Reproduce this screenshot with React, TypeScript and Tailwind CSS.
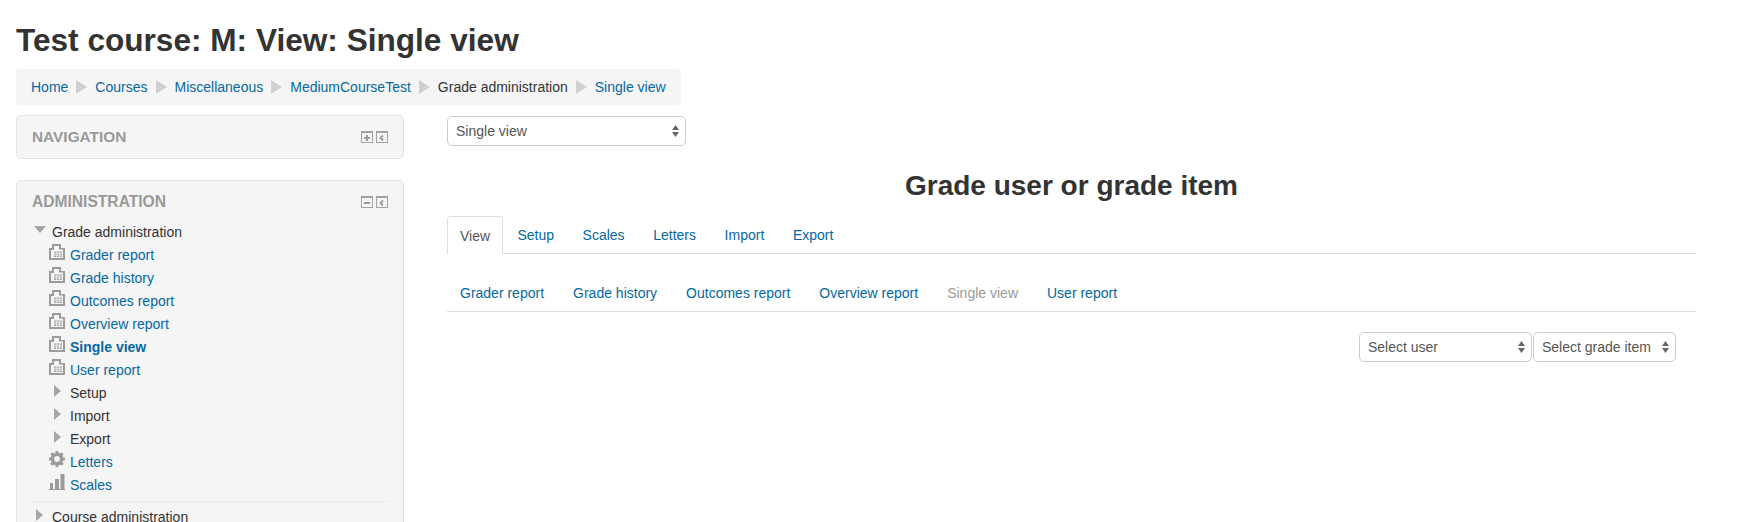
import type { ReactNode } from "react";

const font = "font-['Liberation_Sans',Arial,sans-serif]";
const link = "text-[#0568a0]";

function Sep() {
  return (
    <svg width="11" height="14" viewBox="0 0 11 14" className="shrink-0">
      <path d="M0 0 L11 7 L0 14 Z" fill="#d0d0d0" />
    </svg>
  );
}

function Crumb({ children, plain }: { children: ReactNode; plain?: boolean }) {
  return <span className={plain ? "text-[#333]" : link}>{children}</span>;
}

function BlockIcon({ kind }: { kind: "plus" | "minus" | "left" }) {
  return (
    <svg width="12" height="12" viewBox="0 0 12 12" className="shrink-0">
      <rect x="0.5" y="0.5" width="11" height="11" fill="#f5f5f5" stroke="#a3a3a3" />
      <rect x="0" y="0" width="12" height="2" fill="#a3a3a3" />
      {kind === "plus" && <path d="M3 7 H9 M6 4 V10" stroke="#999" strokeWidth="2" />}
      {kind === "minus" && <path d="M3 7 H9" stroke="#999" strokeWidth="2" />}
      {kind === "left" && <path d="M7 4.5 L4.5 7 L7 9.5" stroke="#999" strokeWidth="1.8" fill="none" />}
    </svg>
  );
}

function TriRight() {
  return (
    <svg width="7" height="12" viewBox="0 0 7 12" className="mb-1 shrink-0">
      <path d="M0 0 L7 6 L0 12 Z" fill="#a6a6a6" />
    </svg>
  );
}

function TriDown() {
  return (
    <svg width="12" height="7" viewBox="0 0 12 7" className="mb-1 shrink-0">
      <path d="M0 0 H12 L6 7 Z" fill="#a6a6a6" />
    </svg>
  );
}

function ReportIcon() {
  return (
    <svg width="16" height="16" viewBox="0 0 16 16" className="mb-[6px] shrink-0">
      <path d="M0 4 H3 V0 H12 V4 H16 V16 H0 Z" fill="#9b9b9b" />
      <path d="M5 2 H10 V5.5 H14 V14 H2 V6 H5 Z" fill="#f5f5f5" />
      <path d="M5 7.5 H13 V13 H5 Z" fill="#a5a5a5" />
      <path d="M5 9.2 H13 M5 11.1 H13 M7.7 7.5 V13 M10.4 7.5 V13" stroke="#f5f5f5" strokeWidth="0.8" />
    </svg>
  );
}

function GearIcon() {
  return (
    <svg width="16" height="16" viewBox="0 0 16 16" className="mb-[6px] shrink-0">
      <circle cx="8" cy="8" r="4.6" fill="none" stroke="#9b9b9b" strokeWidth="3.4" />
      <path d="M8 0 V3 M8 13 V16 M0 8 H3 M13 8 H16 M2.3 2.3 L4.4 4.4 M11.6 11.6 L13.7 13.7 M13.7 2.3 L11.6 4.4 M4.4 11.6 L2.3 13.7" stroke="#9b9b9b" strokeWidth="3" />
    </svg>
  );
}

function BarsIcon() {
  return (
    <svg width="16" height="16" viewBox="0 0 16 16" className="mb-[6px] shrink-0">
      <path d="M1 9 H4 V15 H1 Z M6 5 H10 V15 H6 Z M11.5 0 H15.5 V15 H11.5 Z M0 15 H16 V16 H0 Z" fill="#9b9b9b" />
    </svg>
  );
}

function Arrows() {
  return (
    <svg width="7" height="12" viewBox="0 0 7 12" className="shrink-0">
      <path d="M3.5 0 L7 5 H0 Z M0 7 H7 L3.5 12 Z" fill="#666" />
    </svg>
  );
}

function FakeSelect({ label, className }: { label: string; className: string }) {
  return (
    <div className={`flex h-[30px] items-center justify-between rounded-[5px] border border-[#ccc] bg-white pl-2 pr-[6px] text-[14px] text-[#555] ${className}`}>
      <span>{label}</span>
      <Arrows />
    </div>
  );
}

function TreeRow({ icon, indent, children }: { icon: ReactNode; indent: string; children: ReactNode }) {
  return (
    <div className={`flex h-[23px] items-center ${indent}`}>
      {icon}
      {children}
    </div>
  );
}

const reports = ["Grader report", "Grade history", "Outcomes report", "Overview report"];

export default function App() {
  return (
    <div className={`${font} h-[522px] overflow-hidden bg-white px-4 text-[14px] leading-5 text-[#333]`}>
      <h1 className="pt-[20px] text-[31.6px] font-bold leading-10 text-[#333]">Test course: M: View: Single view</h1>

      {/* breadcrumb */}
      <div className="mt-[9px] flex h-9 w-[665px] items-center gap-[8px] rounded bg-[#f5f5f5] px-[15px]">
        <Crumb>Home</Crumb>
        <Sep />
        <Crumb>Courses</Crumb>
        <Sep />
        <Crumb>Miscellaneous</Crumb>
        <Sep />
        <Crumb>MediumCourseTest</Crumb>
        <Sep />
        <Crumb plain>Grade administration</Crumb>
        <Sep />
        <Crumb>Single view</Crumb>
      </div>

      <div className="mt-[10px] flex gap-[43px]">
        {/* sidebar */}
        <div className="w-[388px] shrink-0">
          <div className="flex h-[44px] items-center justify-between rounded-[5px] border border-[#e3e3e3] bg-[#f5f5f5] pl-[15px] pr-[15px]">
            <span className="text-[15.4px] font-bold text-[#999]">NAVIGATION</span>
            <div className="flex gap-[3px]">
              <BlockIcon kind="plus" />
              <BlockIcon kind="left" />
            </div>
          </div>

          <div className="mt-[21px] rounded-[5px] border border-[#e3e3e3] bg-[#f5f5f5] px-[15px] pb-4 pt-[11px]">
            <div className="flex h-[20px] items-center justify-between">
              <span className="text-[15.6px] font-bold text-[#999]">ADMINISTRATION</span>
              <div className="flex gap-[3px]">
                <BlockIcon kind="minus" />
                <BlockIcon kind="left" />
              </div>
            </div>
            <div className="mt-[8px]">
              <TreeRow icon={<TriDown />} indent="gap-[6px] pl-[2px]">
                <span>Grade administration</span>
              </TreeRow>
              {reports.map((r) => (
                <TreeRow key={r} icon={<ReportIcon />} indent="gap-[5px] pl-[17px]">
                  <span className={link}>{r}</span>
                </TreeRow>
              ))}
              <TreeRow icon={<ReportIcon />} indent="gap-[5px] pl-[17px]">
                <span className={`font-bold ${link}`}>Single view</span>
              </TreeRow>
              <TreeRow icon={<ReportIcon />} indent="gap-[5px] pl-[17px]">
                <span className={link}>User report</span>
              </TreeRow>
              {["Setup", "Import", "Export"].map((s) => (
                <TreeRow key={s} icon={<TriRight />} indent="gap-[9px] pl-[22px]">
                  <span>{s}</span>
                </TreeRow>
              ))}
              <TreeRow icon={<GearIcon />} indent="gap-[5px] pl-[17px]">
                <span className={link}>Letters</span>
              </TreeRow>
              <TreeRow icon={<BarsIcon />} indent="gap-[5px] pl-[17px]">
                <span className={link}>Scales</span>
              </TreeRow>
              <div className="mt-[5px] border-t border-[#eaeaea] pt-[3px]">
                <TreeRow icon={<TriRight />} indent="gap-[9px] pl-[4px]">
                  <span>Course administration</span>
                </TreeRow>
              </div>
            </div>
          </div>
        </div>

        {/* main */}
        <div className="w-[1249px] shrink-0 pt-px">
          <FakeSelect label="Single view" className="w-[239px]" />
          <h2 className="mt-[25px] text-center text-[28px] font-bold leading-[30px] text-[#333]">Grade user or grade item</h2>

          <div className="mt-[15px] flex h-[38px] border-b border-[#ddd]">
            <div className="flex h-[38px] items-center rounded-t border border-b-0 border-[#ddd] bg-white px-3 text-[#555]">View</div>
            {["Setup", "Scales", "Letters", "Import", "Export"].map((t) => (
              <div key={t} className={`flex items-center px-[14.3px] ${link}`}>
                {t}
              </div>
            ))}
          </div>

          <div className="mt-5 flex h-[38px] border-b border-[#ddd]">
            {["Grader report", "Grade history", "Outcomes report", "Overview report"].map((t) => (
              <div key={t} className={`flex items-center px-[14.5px] first:pl-[13px] ${link}`}>
                {t}
              </div>
            ))}
            <div className="flex items-center px-[14.5px] text-[#999]">Single view</div>
            <div className={`flex items-center px-[14.5px] ${link}`}>User report</div>
          </div>

          <div className="mt-[20px] flex justify-end pr-5">
            <FakeSelect label="Select user" className="w-[173px]" />
            <FakeSelect label="Select grade item" className="ml-px w-[143px]" />
          </div>
        </div>
      </div>
    </div>
  );
}
